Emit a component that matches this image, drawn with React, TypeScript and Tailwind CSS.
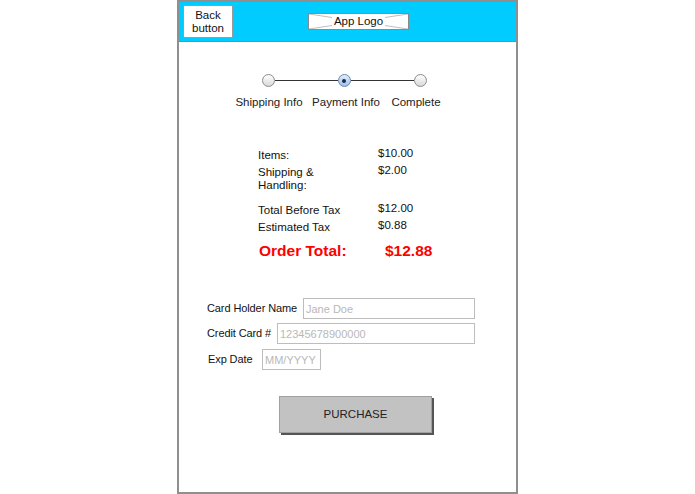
import React from 'react';

const font = { fontFamily: '"Liberation Sans", Arial, Helvetica, sans-serif' };

function StepDot({ active }: { active?: boolean }) {
  if (active) {
    return (
      <div className="w-[13px] h-[13px] rounded-full border border-[#6b86ad] bg-gradient-to-b from-[#e3effb] to-[#9cc0ea] flex items-center justify-center shrink-0">
        <div className="w-[4px] h-[4px] rounded-full bg-[#1b2a4a]" />
      </div>
    );
  }
  return <div className="w-[13px] h-[13px] rounded-full border border-[#8c8c8c] bg-gradient-to-b from-white to-[#d8d8d8] shrink-0" />;
}

function StepCell({ label, active, left, right, labelClass = '' }: { label: string; active?: boolean; left?: boolean; right?: boolean; labelClass?: string }) {
  return (
    <div className="w-[76px] flex flex-col items-center">
      <div className="w-full flex items-center h-[13px]">
        <div className={`flex-1 h-px ${left ? 'bg-[#333]' : ''}`} />
        <StepDot active={active} />
        <div className={`flex-1 h-px ${right ? 'bg-[#333]' : ''}`} />
      </div>
      <div className={`mt-[8px] text-[11.5px] leading-[14px] text-[#222] whitespace-nowrap ${labelClass}`}>{label}</div>
    </div>
  );
}

function SummaryRow({ label, value, className = '' }: { label: React.ReactNode; value: string; className?: string }) {
  return (
    <div className={`flex text-[11.5px] leading-[13px] text-[#111] ${className}`}>
      <div className="w-[120px]">{label}</div>
      <div className="-mt-[2px]">{value}</div>
    </div>
  );
}

function Field({ label, placeholder, width, labelWidth }: { label: string; placeholder: string; width: string; labelWidth: string }) {
  return (
    <div className="flex items-center h-[21px]">
      <span className={`${labelWidth} text-[11px] tracking-[-0.1px] text-[#111] whitespace-nowrap`}>{label}</span>
      <input
        placeholder={placeholder}
        className={`${width} h-[21px] border border-[#bdbdbd] px-[2px] text-[11px] outline-none placeholder:text-[#b8b8b8] bg-white`}
        style={font}
      />
    </div>
  );
}

export default function App() {
  return (
    <div className="w-full h-[494px] bg-white" style={font}>
      <div className="mx-auto w-[341px] h-[494px] border-2 border-[#8f8f8f] flex flex-col">
        {/* header */}
        <div className="h-[40px] bg-[#00ccff] border-b border-[#6f8e99] flex items-center pl-[4px] shrink-0">
          <button className="w-[50px] h-[33px] bg-white border border-[#9a9a9a] text-[11.5px] leading-[13px] text-[#111]">
            Back<br />button
          </button>
          <div className="ml-[75px] relative w-[101px] h-[17px] bg-white border border-[#8a8a8a] flex items-center justify-center">
            <svg className="absolute inset-0 w-full h-full" viewBox="0 0 101 17" preserveAspectRatio="none">
              <line x1="0" y1="0" x2="101" y2="17" stroke="#a8a8a8" strokeWidth="0.8" />
              <line x1="0" y1="17" x2="101" y2="0" stroke="#a8a8a8" strokeWidth="0.8" />
            </svg>
            <span className="relative bg-white px-[2px] text-[11.5px] leading-[13px] text-[#111]">App Logo</span>
          </div>
        </div>

        {/* stepper */}
        <div className="mt-[32px] ml-[51px] flex">
          <StepCell label="Shipping Info" right labelClass="ml-[2px]" />
          <StepCell label="Payment Info" active left right labelClass="ml-[4px]" />
          <StepCell label="Complete" left labelClass="mr-[8px]" />
        </div>

        {/* order summary */}
        <div className="mt-[40px] ml-[79px]">
          <SummaryRow label="Items:" value="$10.00" />
          <SummaryRow className="mt-[4px]" label={<>Shipping &amp;<br />Handling:</>} value="$2.00" />
          <SummaryRow className="mt-[12px]" label="Total Before Tax" value="$12.00" />
          <SummaryRow className="mt-[4px]" label="Estimated Tax" value="$0.88" />
          <div className="mt-[7px] flex text-[15.5px] leading-[20px] font-bold text-[#ff0000]">
            <div className="w-[127px] pl-[1px]">Order Total:</div>
            <div>$12.88</div>
          </div>
        </div>

        {/* payment form */}
        <div className="mt-[37px] ml-[28px] flex flex-col">
          <Field label="Card Holder Name" placeholder="Jane Doe" width="w-[172px]" labelWidth="w-[96px]" />
          <div className="mt-[4px]">
            <Field label="Credit Card #" placeholder="12345678900000" width="w-[198px]" labelWidth="w-[70px]" />
          </div>
          <div className="mt-[5px] ml-[1px]">
            <Field label="Exp Date" placeholder="MM/YYYY" width="w-[59px]" labelWidth="w-[54px]" />
          </div>
        </div>

        <button className="mt-[26px] ml-[100px] w-[153px] h-[37px] bg-[#c2c2c2] border border-[#a0a0a0] shadow-[2px_2px_0_#555] text-[11.5px] text-[#222]">
          PURCHASE
        </button>
      </div>
    </div>
  );
}
